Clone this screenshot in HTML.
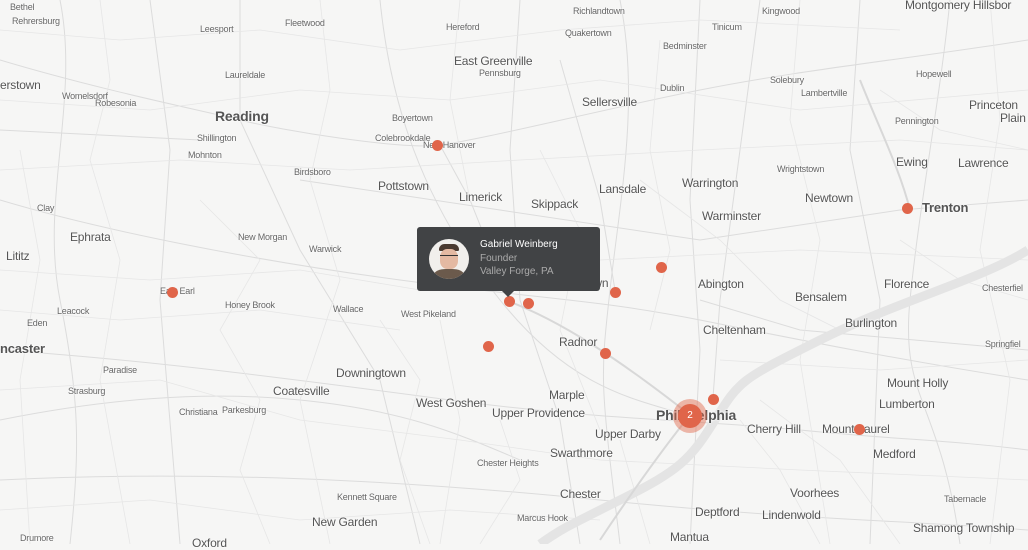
<!DOCTYPE html><html><head><style>
body{margin:0;width:1028px;height:544px;overflow:hidden;background:#f6f6f5;font-family:"Liberation Sans",sans-serif;position:relative}
.l{position:absolute;color:#555;white-space:nowrap;text-shadow:0 0 2px #fff,0 0 2px #fff;letter-spacing:-0.2px}
.s{font-size:9px;color:#666}.m{font-size:12px;color:#555}.b{font-size:14px;font-weight:bold;color:#555}
.d{position:absolute;width:11px;height:11px;border-radius:50%;background:#e0654a;margin:-5px 0 0 -5px}
</style></head><body>
<svg width="1028" height="544" style="position:absolute;left:0;top:0" fill="none">
<g stroke="#dcdcdc" stroke-width="1">
<path d="M0 60 C100 90 200 110 240 120 S400 150 440 145 S600 110 700 90 S900 60 1028 40"/>
<path d="M0 200 C100 230 250 260 400 280 S600 300 700 320 S900 360 1028 380"/>
<path d="M240 0 L240 120 L300 250 L380 380 L420 544"/>
<path d="M520 0 L510 150 L520 300 L560 420 L580 544"/>
<path d="M700 0 L690 200 L700 350 L690 544"/>
<path d="M0 350 C150 360 300 380 450 400 S700 420 800 430 S950 440 1028 450"/>
<path d="M150 0 L170 150 L160 300 L180 544"/>
<path d="M860 0 L850 150 L880 300 L870 544"/>
<path d="M380 0 C390 100 420 200 500 300 S650 400 700 420"/>
<path d="M0 480 C200 470 400 480 600 500 S900 520 1028 530"/>
<path d="M620 0 C640 100 620 200 610 290 S600 380 620 544"/>
<path d="M950 0 C940 100 920 200 910 300 S940 400 960 544"/>
<path d="M0 420 C100 400 200 390 300 400 S450 430 520 460"/>
<path d="M60 0 C80 100 40 200 60 300 S80 450 70 544"/>
<path d="M440 145 L470 200 L510 300 M560 60 L600 200 L615 290 M760 0 L740 150 L720 300 L713 398"/>
<path d="M0 130 L200 140 M300 180 L500 210 L700 240 L900 210 L1028 200 M700 300 L800 330 L1028 350"/>
</g>
<g stroke="#e6e6e6" stroke-width="0.8">
<path d="M0 30 L120 40 L260 30 L400 50 L560 30 L700 20 L900 30"/>
<path d="M100 0 L110 80 L90 160 L120 260 L100 380 L130 544"/>
<path d="M320 0 L330 90 L310 180 L340 280 L300 400 L330 544"/>
<path d="M460 0 L450 100 L470 200 M440 320 L460 420 L440 544"/>
<path d="M800 0 L790 120 L820 240 L800 360 L830 544"/>
<path d="M990 0 L1000 120 L980 250 L1010 380 L990 544"/>
<path d="M0 100 L150 110 L300 90 L450 100 L600 80 L800 110 L1028 90"/>
<path d="M0 170 L180 160 L350 170 L520 160 L700 150 L900 140 L1028 150"/>
<path d="M0 270 L150 280 L300 270 L420 290"/>
<path d="M600 260 L800 250 L1028 260"/>
<path d="M0 310 L120 320 L260 310 L400 330"/>
<path d="M720 360 L880 370 L1028 360"/>
<path d="M0 390 L160 380 L300 420 L460 440 L600 460 L800 470 L1028 480"/>
<path d="M0 510 L150 500 L300 520 L450 510 L600 520"/>
<path d="M200 200 L260 260 L220 330 L260 400 L240 470 L270 544"/>
<path d="M540 150 L580 230 L560 330 L600 430"/>
<path d="M660 40 L650 150 L670 250 L650 330"/>
<path d="M740 420 L780 470 L820 544 M760 400 L840 460 L900 544"/>
<path d="M380 320 L420 380 L400 460 L430 544"/>
<path d="M20 150 L40 260 L20 380 L30 544"/>
<path d="M500 420 L520 480 L480 544 M620 440 L650 544"/>
<path d="M640 180 L720 240 L780 300 L840 330"/>
<path d="M880 90 L940 130 L1028 150 M900 240 L960 280 L1028 300"/>
</g>
<g stroke="#e4e4e4" stroke-width="9">
<path d="M1028 250 C980 280 900 300 820 340 S740 380 715 420 S680 470 620 500 S560 530 540 544"/>
</g>
<g stroke="#d8d8d8" stroke-width="2">
<path d="M505 300 C560 320 620 360 690 415"/>
<path d="M600 540 C640 480 670 440 690 415"/>
<path d="M860 80 C880 130 900 170 910 210"/>
</g>
</svg>
<div class="l s" style="left:10px;top:2px">Bethel</div>
<div class="l s" style="left:12px;top:16px">Rehrersburg</div>
<div class="l s" style="left:200px;top:24px">Leesport</div>
<div class="l s" style="left:285px;top:18px">Fleetwood</div>
<div class="l s" style="left:446px;top:22px">Hereford</div>
<div class="l s" style="left:573px;top:6px">Richlandtown</div>
<div class="l s" style="left:565px;top:28px">Quakertown</div>
<div class="l s" style="left:712px;top:22px">Tinicum</div>
<div class="l s" style="left:663px;top:41px">Bedminster</div>
<div class="l s" style="left:762px;top:6px">Kingwood</div>
<div class="l m" style="left:905px;top:-2px">Montgomery Hillsbor</div>
<div class="l m" style="left:454px;top:54px">East Greenville</div>
<div class="l s" style="left:479px;top:68px">Pennsburg</div>
<div class="l m" style="left:0;top:78px">erstown</div>
<div class="l s" style="left:62px;top:91px">Womelsdorf</div>
<div class="l s" style="left:95px;top:98px">Robesonia</div>
<div class="l s" style="left:225px;top:70px">Laureldale</div>
<div class="l s" style="left:660px;top:83px">Dublin</div>
<div class="l m" style="left:582px;top:95px">Sellersville</div>
<div class="l s" style="left:770px;top:75px">Solebury</div>
<div class="l s" style="left:801px;top:88px">Lambertville</div>
<div class="l s" style="left:916px;top:69px">Hopewell</div>
<div class="l m" style="left:969px;top:98px">Princeton</div>
<div class="l m" style="left:1000px;top:111px">Plain</div>
<div class="l b" style="left:215px;top:108px">Reading</div>
<div class="l s" style="left:392px;top:113px">Boyertown</div>
<div class="l s" style="left:375px;top:133px">Colebrookdale</div>
<div class="l s" style="left:423px;top:140px">New Hanover</div>
<div class="l s" style="left:197px;top:133px">Shillington</div>
<div class="l s" style="left:188px;top:150px">Mohnton</div>
<div class="l s" style="left:895px;top:116px">Pennington</div>
<div class="l m" style="left:896px;top:155px">Ewing</div>
<div class="l m" style="left:958px;top:156px">Lawrence</div>
<div class="l s" style="left:294px;top:167px">Birdsboro</div>
<div class="l s" style="left:777px;top:164px">Wrightstown</div>
<div class="l m" style="left:378px;top:179px">Pottstown</div>
<div class="l m" style="left:599px;top:182px">Lansdale</div>
<div class="l m" style="left:682px;top:176px">Warrington</div>
<div class="l m" style="left:459px;top:190px">Limerick</div>
<div class="l m" style="left:805px;top:191px">Newtown</div>
<div class="l b" style="left:922px;top:200px;font-size:13px">Trenton</div>
<div class="l m" style="left:531px;top:197px">Skippack</div>
<div class="l s" style="left:37px;top:203px">Clay</div>
<div class="l m" style="left:702px;top:209px">Warminster</div>
<div class="l m" style="left:70px;top:230px">Ephrata</div>
<div class="l s" style="left:238px;top:232px">New Morgan</div>
<div class="l s" style="left:309px;top:244px">Warwick</div>
<div class="l m" style="left:6px;top:249px">Lititz</div>
<div class="l m" style="left:553px;top:276px">Norristown</div>
<div class="l m" style="left:698px;top:277px">Abington</div>
<div class="l m" style="left:884px;top:277px">Florence</div>
<div class="l s" style="left:982px;top:283px">Chesterfiel</div>
<div class="l s" style="left:160px;top:286px">East Earl</div>
<div class="l s" style="left:225px;top:300px">Honey Brook</div>
<div class="l m" style="left:795px;top:290px">Bensalem</div>
<div class="l s" style="left:57px;top:306px">Leacock</div>
<div class="l s" style="left:333px;top:304px">Wallace</div>
<div class="l s" style="left:401px;top:309px">West Pikeland</div>
<div class="l s" style="left:27px;top:318px">Eden</div>
<div class="l m" style="left:845px;top:316px">Burlington</div>
<div class="l m" style="left:703px;top:323px">Cheltenham</div>
<div class="l m" style="left:559px;top:335px">Radnor</div>
<div class="l s" style="left:985px;top:339px">Springfiel</div>
<div class="l b" style="left:0;top:341px;font-size:13px">ncaster</div>
<div class="l s" style="left:103px;top:365px">Paradise</div>
<div class="l m" style="left:336px;top:366px">Downingtown</div>
<div class="l m" style="left:887px;top:376px">Mount Holly</div>
<div class="l s" style="left:68px;top:386px">Strasburg</div>
<div class="l m" style="left:273px;top:384px">Coatesville</div>
<div class="l m" style="left:549px;top:388px">Marple</div>
<div class="l m" style="left:416px;top:396px">West Goshen</div>
<div class="l m" style="left:879px;top:397px">Lumberton</div>
<div class="l s" style="left:179px;top:407px;font-size:9px">Christiana</div>
<div class="l s" style="left:222px;top:405px">Parkesburg</div>
<div class="l m" style="left:492px;top:406px">Upper Providence</div>
<div class="l b" style="left:656px;top:407px">Philadelphia</div>
<div class="l m" style="left:747px;top:422px">Cherry Hill</div>
<div class="l m" style="left:822px;top:422px">Mount Laurel</div>
<div class="l m" style="left:595px;top:427px">Upper Darby</div>
<div class="l m" style="left:873px;top:447px">Medford</div>
<div class="l m" style="left:550px;top:446px">Swarthmore</div>
<div class="l s" style="left:477px;top:458px">Chester Heights</div>
<div class="l m" style="left:560px;top:487px">Chester</div>
<div class="l m" style="left:790px;top:486px">Voorhees</div>
<div class="l s" style="left:337px;top:492px">Kennett Square</div>
<div class="l s" style="left:944px;top:494px">Tabernacle</div>
<div class="l m" style="left:695px;top:505px">Deptford</div>
<div class="l m" style="left:762px;top:508px">Lindenwold</div>
<div class="l s" style="left:517px;top:513px">Marcus Hook</div>
<div class="l m" style="left:312px;top:515px">New Garden</div>
<div class="l m" style="left:913px;top:521px">Shamong Township</div>
<div class="l s" style="left:20px;top:533px">Drumore</div>
<div class="l m" style="left:192px;top:536px">Oxford</div>
<div class="l m" style="left:670px;top:530px">Mantua</div>
<div class="d" style="left:437px;top:145px"></div>
<div class="d" style="left:661px;top:267px"></div>
<div class="d" style="left:907px;top:208px"></div>
<div class="d" style="left:172px;top:292px"></div>
<div class="d" style="left:509px;top:301px"></div>
<div class="d" style="left:528px;top:303px"></div>
<div class="d" style="left:615px;top:292px"></div>
<div class="d" style="left:488px;top:346px"></div>
<div class="d" style="left:605px;top:353px"></div>
<div class="d" style="left:713px;top:399px"></div>
<div class="d" style="left:859px;top:429px"></div>
<div style="position:absolute;left:673px;top:399px;width:34px;height:34px;border-radius:50%;background:rgba(224,101,74,.45)"></div>
<div style="position:absolute;left:678px;top:404px;width:24px;height:24px;border-radius:50%;background:#e0654a;color:#fff;font-size:10px;text-align:center;line-height:24px">2</div>
<div style="position:absolute;left:417px;top:227px;width:183px;height:64px;background:#414345;border-radius:3px"></div>
<div style="position:absolute;left:502px;top:291px;width:0;height:0;border-left:6px solid transparent;border-right:6px solid transparent;border-top:6px solid #414345"></div>
<div style="position:absolute;left:429px;top:239px;width:40px;height:40px;border-radius:50%;background:#f1efec;overflow:hidden">
<div style="position:absolute;left:10px;top:5px;width:20px;height:7px;background:#4a3a30;border-radius:8px 8px 2px 2px"></div>
<div style="position:absolute;left:11px;top:10px;width:18px;height:20px;background:#e4b9a2;border-radius:40%"></div>
<div style="position:absolute;left:11px;top:16px;width:18px;height:4px;border-top:1px solid #333"></div>
<div style="position:absolute;left:5px;top:30px;width:30px;height:14px;background:#6b5a4c;border-radius:40% 40% 0 0"></div></div>
<div style="position:absolute;left:480px;top:239px;color:#fff;font-size:10px">Gabriel Weinberg</div>
<div style="position:absolute;left:480px;top:253px;color:#aaa;font-size:10px">Founder</div>
<div style="position:absolute;left:480px;top:266px;color:#aaa;font-size:10px">Valley Forge, PA</div>
</body></html>
